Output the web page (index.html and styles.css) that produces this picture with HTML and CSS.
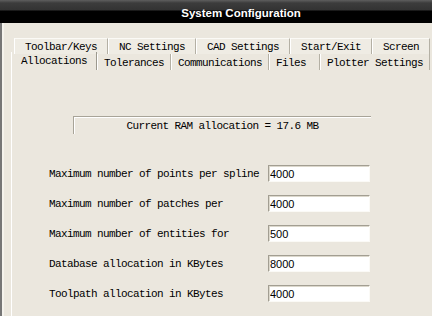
FILE: index.html
```html
<!DOCTYPE html>
<html lang="en">
<head>
    <meta charset="UTF-8">
    <title>System Configuration</title>
    <link rel="stylesheet" href="styles.css">
</head>
<body>
    <div class="titlebar">
        <span class="title">System Configuration</span>
    </div>

    <div class="window">
        <div class="tabs">
            <div class="tab-row back">
                <div class="tab">Toolbar/Keys</div>
                <div class="tab">NC Settings</div>
                <div class="tab">CAD Settings</div>
                <div class="tab">Start/Exit</div>
                <div class="tab">Screen</div>
            </div>
            <div class="tab-row front">
                <div class="tab active">Allocations</div>
                <div class="tab">Tolerances</div>
                <div class="tab">Communications</div>
                <div class="tab wide">Files</div>
                <div class="tab">Plotter Settings</div>
            </div>
        </div>

        <div class="pane">
            <div class="ram">Current RAM allocation = 17.6 MB</div>

            <div class="fields">
                <label>Maximum number of points per spline</label>
                <input type="text" value="4000">

                <label>Maximum number of patches per</label>
                <input type="text" value="4000">

                <label>Maximum number of entities for</label>
                <input type="text" value="500">

                <label>Database allocation in KBytes</label>
                <input type="text" value="8000">

                <label>Toolpath allocation in KBytes</label>
                <input type="text" value="4000">
            </div>
        </div>
    </div>
</body>
</html>
```

FILE: styles.css
```css
* {
    box-sizing: border-box;
}

html, body {
    margin: 0;
    padding: 0;
    height: 100%;
    overflow: hidden;
    background: #ebe7de;
    font-family: 'Liberation Mono', monospace;
    font-size: 11px;
    letter-spacing: -0.6px;
    color: #000;
}

body {
    display: flex;
    flex-direction: column;
}

/* TITLE BAR */
.titlebar {
    flex: none;
    height: 23px;
    display: flex;
    align-items: center;
    justify-content: center;
    padding-left: 50px;
    background: linear-gradient(#5e5e5e 0, #3c3c3c 3px, #333 10px, #000 11px, #000 100%);
}

.title {
    font-family: 'Liberation Sans', sans-serif;
    font-weight: 700;
    font-size: 11.5px;
    letter-spacing: 0;
    color: #fff;
    padding-top: 2px;
}

/* WINDOW */
.window {
    flex: 1;
    min-height: 0;
    display: flex;
    flex-direction: column;
    border-left: 2px solid #767676;
    box-shadow: inset 2px 0 0 #f4f2ec;
    padding: 15px 0 0 9px;
}

.tab-row {
    display: flex;
    height: 16px;
}

.tab-row.back {
    margin-left: 3px;
}

.tab {
    display: flex;
    align-items: center;
    white-space: nowrap;
    border-left: 1px solid #fff;
    border-right: 1px solid #b4b0a4;
}

.back .tab {
    padding: 0 10px;
    background: #efece4;
    border-top: 1px solid #fbfaf6;
}

.front .tab {
    padding: 0 6px;
    padding-top: 1px;
}

.front .tab.wide {
    padding-right: 13px;
}

.front .tab.active {
    padding: 0 9px 0 9px;
    margin-top: -2px;
    height: 18px;
    border-right: 1px solid #9c998e;
}

/* PANE */
.pane {
    flex: 1;
    min-height: 0;
    border-left: 1px solid #fff;
    padding-top: 46px;
}

.ram {
    margin-left: 61px;
    width: 298px;
    height: 18px;
    border-top: 1px solid #a8a498;
    border-left: 1px solid #a8a498;
    box-shadow: inset 1px 1px 0 #fff;
    text-align: center;
    line-height: 18px;
}

.fields {
    display: grid;
    grid-template-columns: 219px 102px;
    row-gap: 13px;
    align-items: center;
    margin: 31px 0 0 37px;
}

.fields input {
    height: 17px;
    width: 102px;
    margin: 0;
    padding: 0 0 0 1px;
    border: 1px solid;
    border-color: #a29e92 #fbfaf6 #fbfaf6 #a29e92;
    box-shadow: inset 1px 1px 0 #dcd8cc;
    background: #fff;
    font-family: 'Liberation Sans', sans-serif;
    font-size: 11px;
    letter-spacing: 0;
    outline: none;
}
```
